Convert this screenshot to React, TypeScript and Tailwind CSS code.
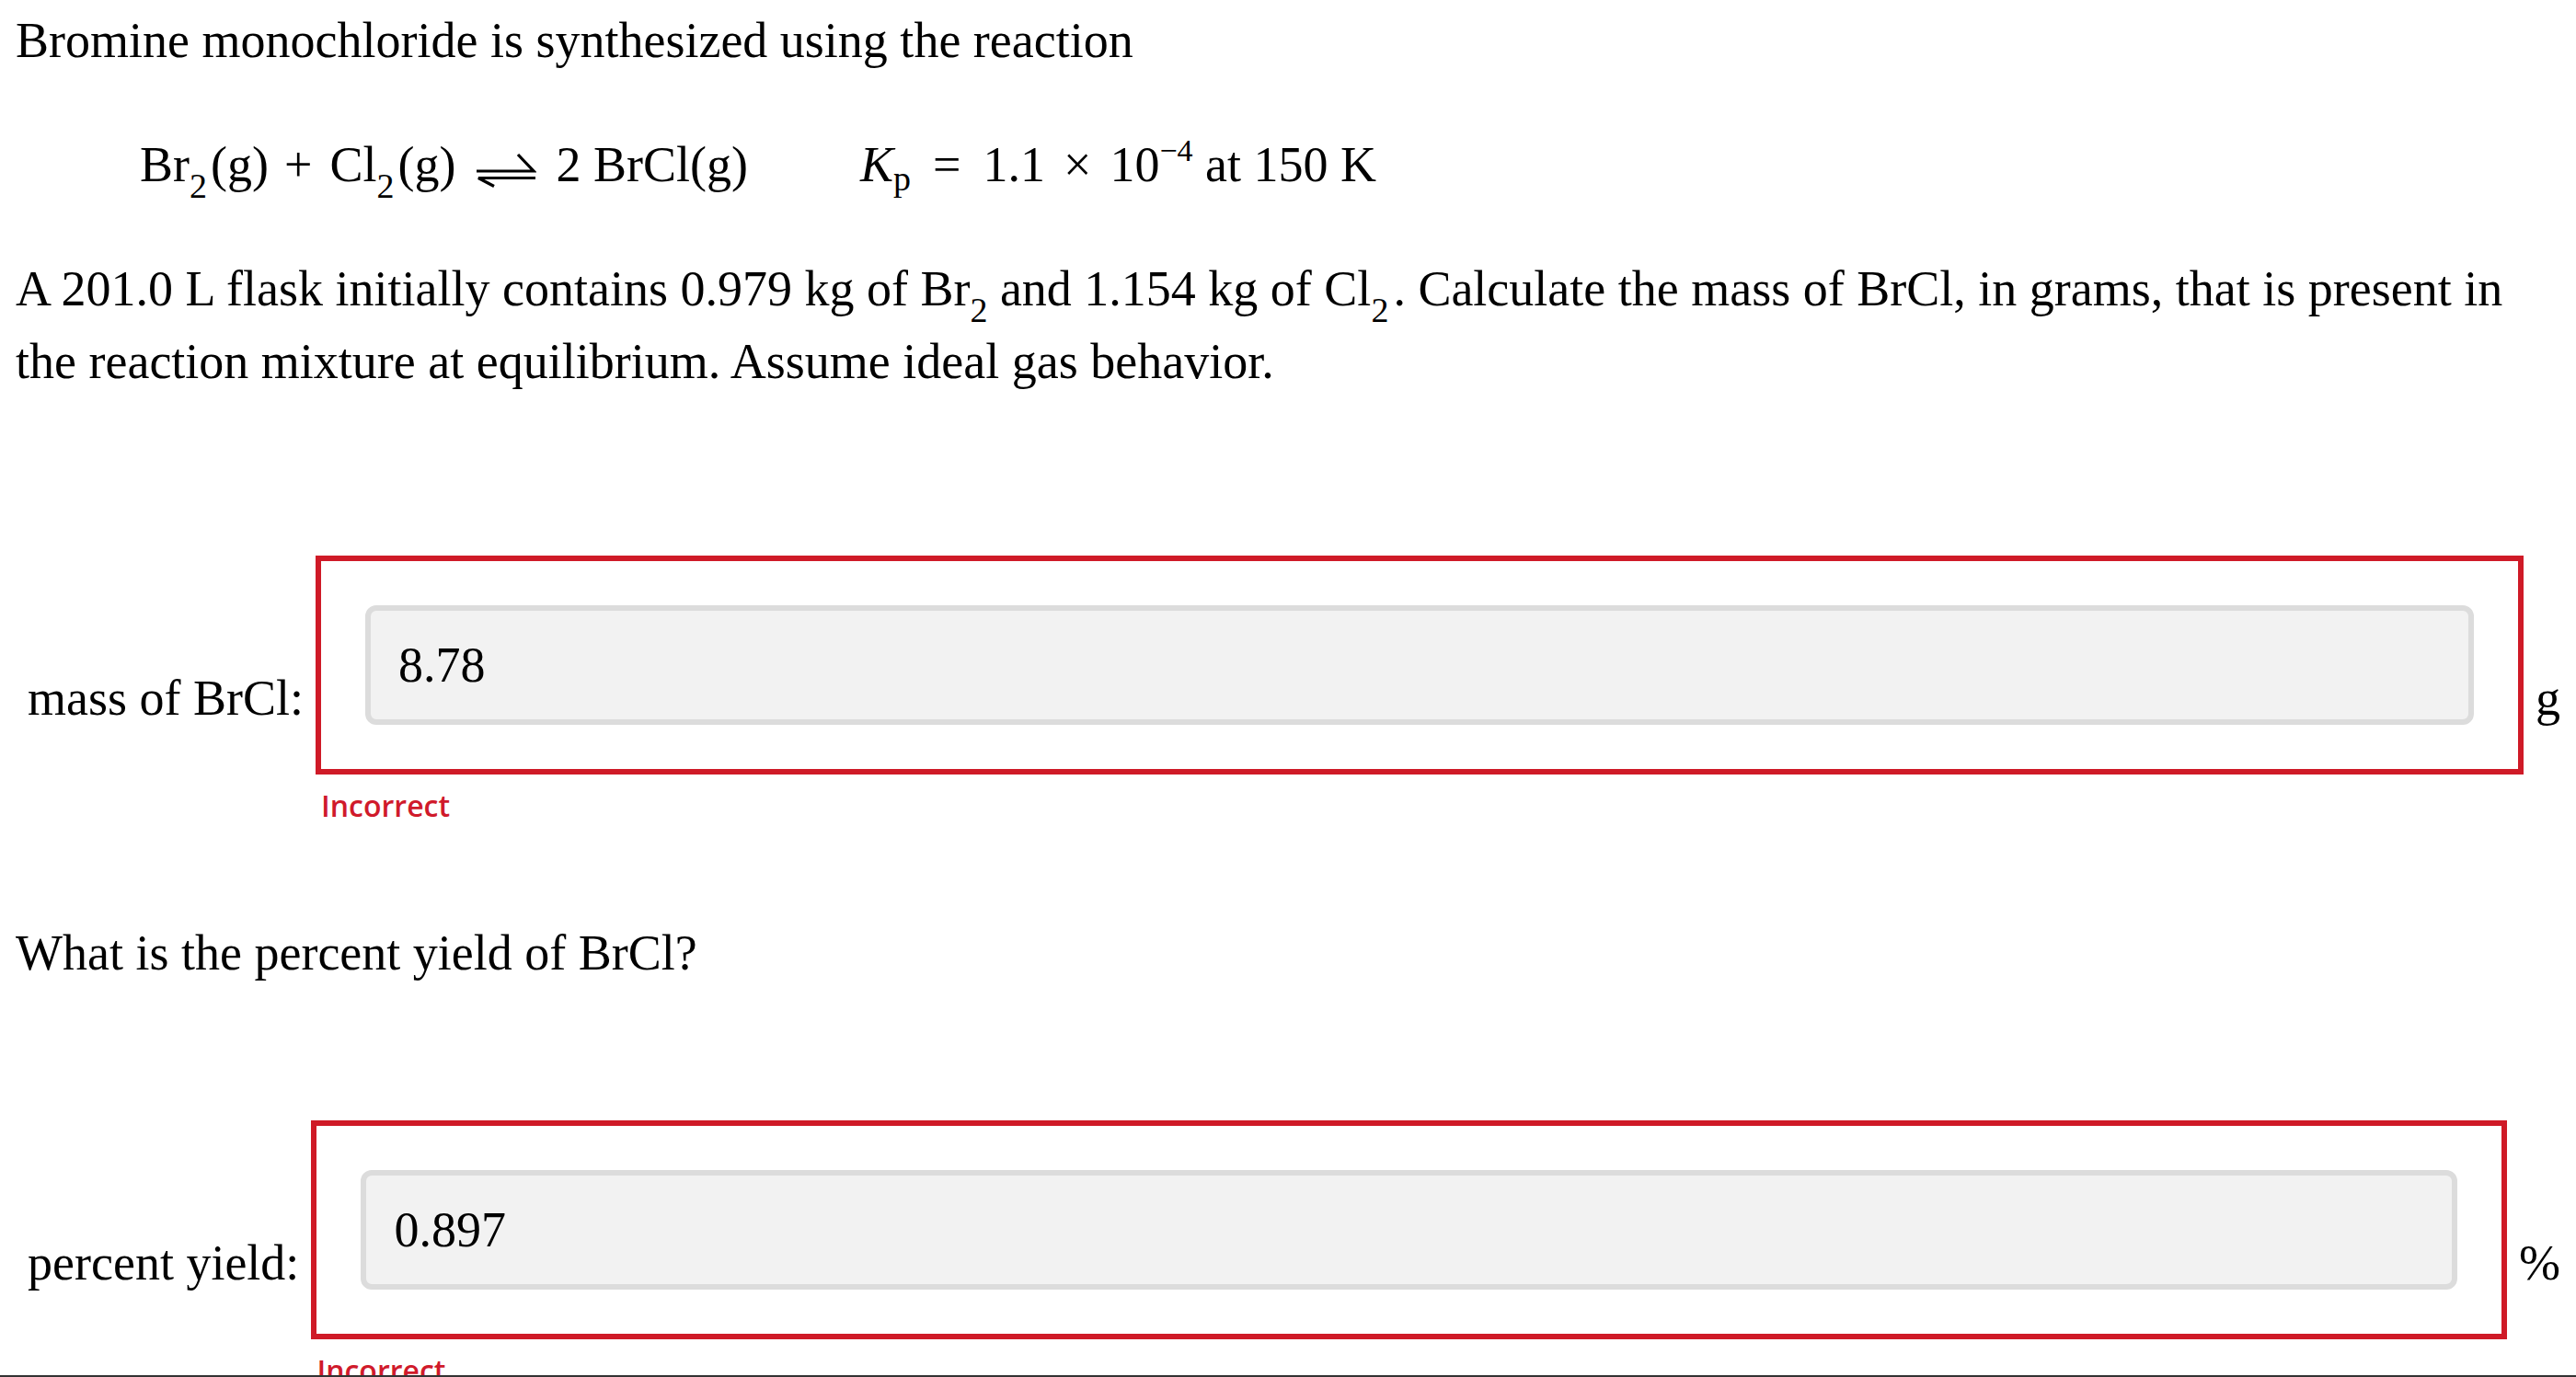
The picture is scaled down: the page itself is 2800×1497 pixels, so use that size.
import React from 'react'

// Chemistry problem card: equilibrium question with two graded answer rows.

function Sub({ children }: { children: React.ReactNode }) {
  return <span className="relative top-[18px] text-[38px] leading-none">{children}</span>
}

function Harpoons() {
  // right/left harpoon pair (⇌)
  return (
    <svg width="66" height="38" viewBox="0 0 66 38" className="inline-block" fill="none" stroke="#000" strokeWidth="3.2">
      <path d="M1 20 H63 L46 2" strokeLinejoin="miter" strokeLinecap="butt" />
      <path d="M65 27.5 H3 L20 36.5" strokeLinejoin="miter" strokeLinecap="butt" />
    </svg>
  )
}

function AnswerRow({ label, value, unit }: { label: string; value: string; unit: string }) {
  return (
    <div className="flex items-start gap-[13px] pl-[13px]">
      <span className="mt-[116px] shrink-0 whitespace-nowrap leading-[79px]">{label}</span>
      <div className="flex min-w-0 flex-1 flex-col">
        <div className="border-[6px] border-[#cf1a27] p-[48px]">
          <input
            readOnly
            value={value}
            className="block h-[130px] w-full rounded-[12px] border-[6px] border-[#dcdcdc] bg-[#f2f2f2] pl-[30px] text-[54px] text-black outline-none"
          />
        </div>
        <div className="mt-[18px] ml-[6px] font-['Open_Sans','Noto_Sans',sans-serif] text-[32px] leading-[32px] font-semibold text-[#d01a2b]">
          Incorrect
        </div>
      </div>
      <span className="mt-[116px] shrink-0 leading-[79px]">{unit}</span>
    </div>
  )
}

export default function App() {
  return (
    <div className="relative h-[1497px] w-[2800px] overflow-hidden bg-white font-['Liberation_Serif','Times_New_Roman',serif] text-[54px] text-black">
      <div className="px-[17px] pt-[5px]">
        <p className="leading-[79px]">Bromine monochloride is synthesized using the reaction</p>

        {/* reaction line */}
        <div className="mt-[56px] whitespace-nowrap pl-[135px] leading-[79px]">
          <span>Br</span>
          <Sub>2</Sub>
          <span className="ml-[4px]">(g)</span>
          <span className="ml-[17px] mr-[19px]">+</span>
          <span>Cl</span>
          <Sub>2</Sub>
          <span className="ml-[4px]">(g)</span>
          <span className="ml-[22px] mr-[21px]">
            <Harpoons />
          </span>
          <span>2 BrCl(g)</span>
          <span className="ml-[122px] italic">K</span>
          <span className="relative top-[10px] text-[38px] leading-none">p</span>
          <span className="ml-[24px] mr-[24px]">=</span>
          <span>1.1</span>
          <span className="mx-[20px]">×</span>
          <span>10</span>
          <span className="relative -top-[22px] text-[34px] leading-none">−4</span>
          <span> at 150 K</span>
        </div>

        <p className="mt-[56px] leading-[79px]">
          A 201.0 L flask initially contains 0.979 kg of Br<Sub>2</Sub> and 1.154 kg of Cl<Sub>2</Sub>
          <span className="ml-[5px]">.</span> Calculate the mass of BrCl, in grams, that is present in the reaction
          mixture at equilibrium. Assume ideal gas behavior.
        </p>

        <div className="mt-[171px]">
          <AnswerRow label="mass of BrCl:" value="8.78" unit="g" />
        </div>

        <p className="mt-[105px] leading-[79px]">What is the percent yield of BrCl?</p>

        <div className="mt-[142px]">
          <AnswerRow label="percent yield:" value="0.897" unit="%" />
        </div>
      </div>
      <div className="absolute inset-x-0 bottom-0 h-[2px] bg-[#333]" />
    </div>
  )
}
